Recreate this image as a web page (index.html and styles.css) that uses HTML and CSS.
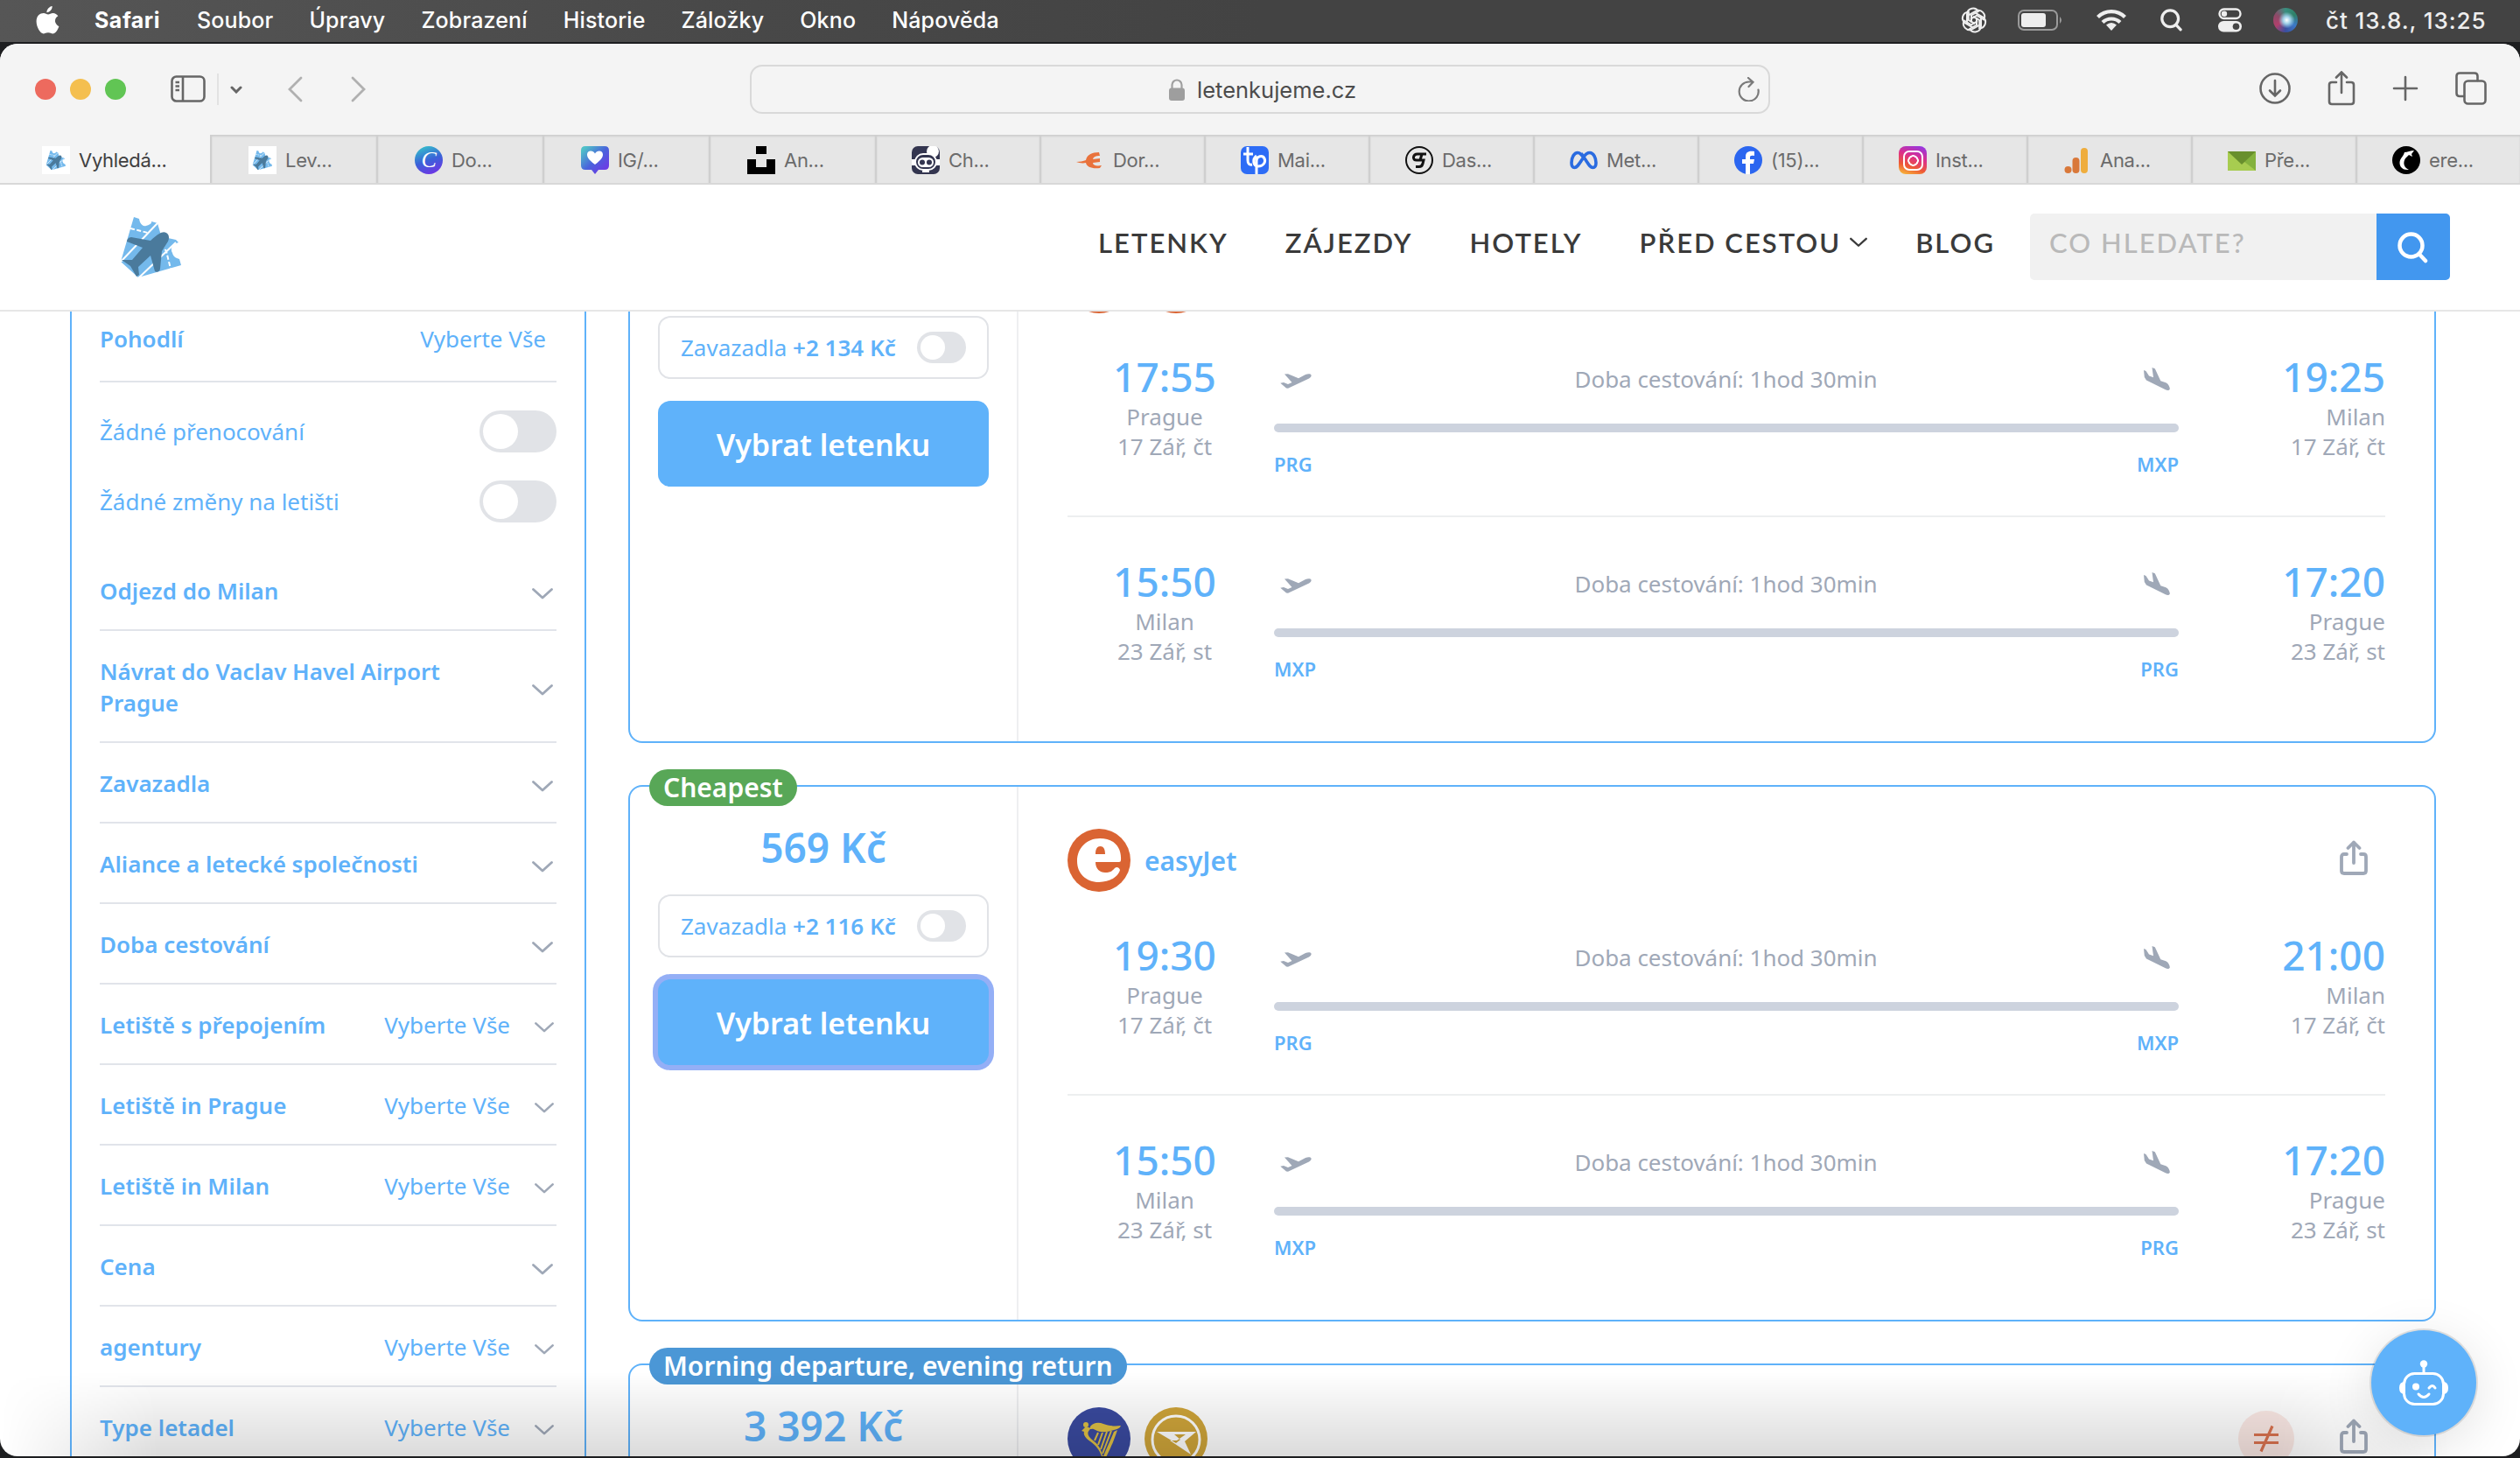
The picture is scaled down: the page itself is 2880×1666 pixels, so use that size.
FILE: index.html
```
<!DOCTYPE html>
<html lang="cs">

<head>
    <meta charset="UTF-8">
    <meta name="viewport" content="width=device-width, initial-scale=1.0">
    <title>Vyhledávání letenek</title>
    <link rel="stylesheet" href="styles.css">
</head>

<body>
    <!-- icons -->
    <svg width="0" height="0" class="sprite">
        <symbol id="logo" viewBox="16 14 74 74">
            <path fill="#74b9ec" d="M33 17l6 2c1 6 4 9 8 8s7-3 6-5l7 2 4 14 8 3 9 2 3 3c-7 2-10 7-7 12 1 4 4 6 8 7l2 7-49 14-20-18z"/>
            <path stroke="#fff" stroke-width="2" d="M60 24L18 68M81 46L38 87"/>
            <path stroke="#fff" stroke-width="2" stroke-dasharray="5 2.5" fill="none" d="M29 30l20 5M64 48l6 8 5 20"/>
            <path fill="#4a7a9c" d="M70 35c-4-2-8 0-18 9l-22-4c-3 0-5 3-5 5l18 7-12 14H19l10 7 7 12 3-2-1-9 14-13 5 18c2 2 6 0 6-3l2-20 5-8c4-5 4-11 0-13z"/>
        </symbol>
        <symbol id="chevron" viewBox="0 0 24 13">
            <path fill="none" stroke="currentColor" stroke-width="2.8" stroke-linecap="round" stroke-linejoin="round" d="M1.5 1.5L12 11 22.5 1.5"/>
        </symbol>
        <symbol id="takeoff" viewBox="0 0 36 17">
            <path fill="currentColor" d="M5 .5l4-.3 12 5 8-4.2c3-1 6-.8 6.500.5s-.5 2.500-2.500 4L9 16.800 7 16.600.3 10.700l3.700-.6 5 1.800 4.500-2z"/>
        </symbol>
        <symbol id="landing" viewBox="0 0 30 26">
            <path fill="currentColor" d="M0 3l2.500 1L6 9.500l5 1.800L9.500 0l3.300 1.200 6.500 14 6 2c3 1.500 4.700 5 4.500 7.500-1 1.600-3 1.400-5 .6L3 14.500.8 11z"/>
        </symbol>
        <symbol id="share" viewBox="0 0 32 40">
            <path fill="none" stroke="currentColor" stroke-width="3.800" stroke-linecap="round" stroke-linejoin="round" d="M16 26V2.500M9.500 9L16 2.500 22.500 9M8 16H5q-3 0-3 3v16q0 3 3 3h22q3 0 3-3V19q0-3-3-3h-3"/>
        </symbol>
        <symbol id="search" viewBox="0 0 36 36">
            <path fill="none" stroke="currentColor" stroke-width="4.500" stroke-linecap="round" d="M24.500 25L32 33M28.500 15.500a13 13 0 1 1-26 0 13 13 0 0 1 26 0z"/>
        </symbol>
        <symbol id="easyjet" viewBox="0 0 72 72">
            <circle cx="36" cy="36" r="36" fill="#da6433"/>
            <path fill="#fff" fill-rule="evenodd" d="M37 11c-15 0-26 11-26 26 0 14 10 24 25 24 12 0 22-6 24-14-1-3-4-4-6-2-3 4-7 5-11 5-6 0-11-4-11-12h27q2 0 2-2c1-15-8-25-24-25zM32 29c0-6 2-9 5.500-9s5.500 3 5.500 9z"/>
        </symbol>
    </svg>

    <!-- system menu bar -->
    <div class="menubar">
        <svg class="apple" viewBox="0 0 26 31">
            <path fill="#fff" d="M18 0c.3 3-2.500 7-6 7-.3-3 2.800-6.600 6-7zM24.500 11c-5 3-4 9 1 11.500-1.500 4-4 8-6.800 8-2 0-2.800-1.200-5.200-1.200s-3.400 1.200-5.200 1.200C5 30.500.5 23.500.5 17S4.500 7.800 8.500 7.800c2 0 3.500 1.300 5 1.300S17 7.600 19 7.700c2.200.1 4.200 1.200 5.500 3.300z"/>
        </svg>
        <span class="app-name">Safari</span>
        <span class="menu">Soubor</span>
        <span class="menu">Úpravy</span>
        <span class="menu">Zobrazení</span>
        <span class="menu">Historie</span>
        <span class="menu">Záložky</span>
        <span class="menu">Okno</span>
        <span class="menu">Nápověda</span>
        <div class="tray">
            <svg width="32" height="32" viewBox="0 0 32 32" fill="none" stroke="#eee" stroke-width="2">
                <g id="petal"><path d="M8 20V9a7 7 0 0 1 13-3l-8 4.500V19"/></g>
                <use href="#petal" transform="rotate(60 16 16)"/>
                <use href="#petal" transform="rotate(120 16 16)"/>
                <use href="#petal" transform="rotate(180 16 16)"/>
                <use href="#petal" transform="rotate(240 16 16)"/>
                <use href="#petal" transform="rotate(300 16 16)"/>
            </svg>
            <svg width="52" height="24" viewBox="0 0 52 24">
                <rect x="1" y="1" width="44" height="22" rx="6" fill="none" stroke="#9a9a9a" stroke-width="2"/>
                <rect x="4" y="4" width="28" height="16" rx="3" fill="#eee"/>
                <path d="M48 8q4 4 0 8z" fill="#9a9a9a"/>
            </svg>
            <svg width="34" height="26" viewBox="0 0 34 26" fill="none" stroke="#eee" stroke-width="4.200">
                <path d="M1.500 9.500a22 22 0 0 1 31 0M7 15.500a14.500 14.500 0 0 1 20 0"/>
                <path fill="#eee" stroke="none" d="M17 25l-6-6.500q6-5 12 0z"/>
            </svg>
            <svg width="26" height="26"><use href="#search"/></svg>
            <svg width="28" height="28" viewBox="0 0 28 28">
                <rect x="1.500" y="1.500" width="24" height="10.500" rx="5.200" fill="none" stroke="#eee" stroke-width="2.400"/>
                <circle cx="7" cy="6.800" r="3.200" fill="#eee"/>
                <rect x="0" y="15" width="27" height="12.500" rx="6.200" fill="#eee"/>
                <circle cx="20.500" cy="21.200" r="3.800" fill="#444"/>
            </svg>
            <span class="siri"></span>
            <span class="clock">čt 13.8., 13:25</span>
        </div>
    </div>

    <div class="window">
        <!-- browser toolbar -->
        <div class="toolbar">
            <div class="toolbar-left">
                <span class="light red"></span>
                <span class="light yellow"></span>
                <span class="light green"></span>
                <svg class="panel-icon" width="40" height="32" viewBox="0 0 40 32" fill="none" stroke="#666" stroke-width="2.600">
                    <rect x="1.500" y="1.500" width="37" height="28" rx="5"/>
                    <path d="M14 1.500v28M5.500 8h4.500M5.500 12.500h4.500M5.500 17h4.500"/>
                </svg>
                <span class="toolbar-sep"></span>
                <svg class="mini-chevron" width="14" height="9" viewBox="0 0 14 9" fill="none" stroke="#666" stroke-width="3" stroke-linecap="round"><path d="M2 2l5 5 5-5"/></svg>
                <svg class="back" width="17" height="30" viewBox="0 0 17 30" fill="none" stroke="#b0b0b0" stroke-width="2.800" stroke-linecap="round"><path d="M15 2L2 15l13 13"/></svg>
                <svg class="forward" width="17" height="30" viewBox="0 0 17 30" fill="none" stroke="#b0b0b0" stroke-width="2.800" stroke-linecap="round"><path d="M2 2l13 13L2 28"/></svg>
            </div>
            <div class="address">
                <svg width="18" height="25" viewBox="0 0 18 25">
                    <path fill="none" stroke="#a0a0a0" stroke-width="2.200" d="M3.500 12V7a5.500 5.500 0 0 1 11 0v5"/>
                    <rect y="10.500" width="18" height="14.500" rx="3" fill="#9e9e9e"/>
                </svg>
                <span>letenkujeme.cz</span>
                <svg class="reload" width="26" height="28" viewBox="0 0 26 28" fill="none" stroke="#7a7a7a" stroke-width="2.200" stroke-linecap="round">
                    <path d="M23.500 14.500A11 11 0 1 1 13 5.500h4M12 1l5.500 4.800L12.500 11"/>
                </svg>
            </div>
            <div class="toolbar-right">
                <svg width="36" height="36" viewBox="0 0 36 36"><circle cx="18" cy="18" r="16.500"/><path d="M18 9v17M12 20.500l6 6 6-6"/></svg>
                <svg width="32" height="40" viewBox="0 0 32 40"><path d="M16 25V2M10 7.500L16 1.500l6 6M10 13H5q-3 0-3 3v19q0 3 3 3h22q3 0 3-3V16q0-3-3-3h-5"/></svg>
                <svg width="30" height="30" viewBox="0 0 30 30"><path d="M15 2v26M2 15h26"/></svg>
                <svg width="36" height="38" viewBox="0 0 36 38"><rect x="10.500" y="10.500" width="24" height="26" rx="4"/><path d="M10 28H5q-3.500 0-3.500-3.500V5Q1.500 1.500 5 1.500h17q3.500 0 3.500 3.500v5"/></svg>
            </div>
        </div>

        <div class="tabs">
            <div class="tab active"><span class="favicon white"><svg width="24" height="24"><use href="#logo"/></svg></span>Vyhledá...</div>
            <div class="tab wide"><span class="favicon white"><svg width="24" height="24"><use href="#logo"/></svg></span>Lev...</div>
            <div class="tab wide"><span class="favicon canva">C</span>Do...</div>
            <div class="tab wide">
                <svg class="favicon" viewBox="0 0 32 32">
                    <defs><linearGradient id="heart" x2="1" y2="1"><stop offset=".1" stop-color="#4fc0c8"/><stop offset=".5" stop-color="#4a63dc"/><stop offset="1" stop-color="#7a2be8"/></linearGradient></defs>
                    <path fill="url(#heart)" d="M5 0h22q5 0 5 5v17q0 5-5 5h-7l-4 5-4-5H5q-5 0-5-5V5q0-5 5-5z"/>
                    <path fill="#fff" d="M16 21C8 15 7 12 7 9.500c0-5 7-5 9-1 2-4 9-4 9 1 0 2.500-1 5.500-9 11.500z"/>
                </svg>IG/...
            </div>
            <div class="tab wide">
                <svg class="favicon" viewBox="0 0 32 32"><path d="M10 0h12v9H10zM0 15h10v9h12v-9h10v17H0z"/></svg>An...
            </div>
            <div class="tab">
                <svg class="favicon" viewBox="0 0 32 32">
                    <rect width="32" height="32" rx="7" fill="#33354f"/>
                    <circle cx="24" cy="6" r="7" fill="#fff"/>
                    <path fill="#fff" d="M0 15h4v7H0zM28 15h4v7h-4z"/>
                    <rect x="4" y="9" width="24" height="18" rx="9" fill="#33354f" stroke="#fff" stroke-width="2"/>
                    <rect x="7" y="13" width="18" height="11" rx="5.500" fill="#fff"/>
                    <circle cx="12" cy="18.500" r="3" fill="#33354f"/><circle cx="20" cy="18.500" r="3" fill="#33354f"/>
                    <path d="M12 28h8v2h-8z" fill="#fff"/>
                </svg>Ch...
            </div>
            <div class="tab">
                <svg class="favicon" viewBox="0 0 32 32"><path fill="#e9723c" d="M26 7l1 4c-5 0-7 1-8 4l8-1v4l-8 1c0 3 4 4 10 3l-2 3c-9 1-15-1-16-6-4 1-8 0-11-1 4 0 8-1 11-2 1-6 7-9 15-9z"/></svg>Dor...
            </div>
            <div class="tab">
                <svg class="favicon" viewBox="0 0 32 32"><rect width="32" height="32" rx="7" fill="#2d6cf6"/><path fill="none" stroke="#fff" stroke-width="3" d="M8 1v15q0 6 5 5M3 9h11M18 11c-5 4-4 12 2 12s9-5 7-9-9-3-9 3v15"/></svg>Mai...
            </div>
            <div class="tab">
                <svg class="favicon" viewBox="0 0 32 32" fill="none" stroke="#111"><circle cx="16" cy="16" r="15" stroke-width="2"/><path stroke-width="3" d="M18 9h-4q-4 0-4.500 3.500T13 16h4M24 9h-5l-2 7h4l-1 4q-1 3.500-4 3.500h-4"/></svg>Das...
            </div>
            <div class="tab">
                <svg class="favicon" viewBox="0 0 32 32" fill="none" stroke="#2a6be0" stroke-width="3.600"><path d="M16 14C13 8 11 7.500 9 7.500 5 7.500 2 13 2 19c0 3 1 5.500 3.500 5.500 3 0 4.500-3 10.500-12 2-3.500 4-5 7-5 4 0 7 6 7 11.500 0 3-1 5.500-3.500 5.500-3.500 0-5-4-10.500-12z"/></svg>Met...
            </div>
            <div class="tab">
                <svg class="favicon" viewBox="0 0 32 32"><circle cx="16" cy="16" r="16" fill="#2b66f0"/><path fill="#fff" d="M13 32V20H9v-5h4v-3c0-5 3-7 10-6v5c-4-.5-5 0-5 2v2h5l-1 5h-4v12z"/></svg>(15)...
            </div>
            <div class="tab"><span class="favicon insta"><i></i></span>Inst...</div>
            <div class="tab">
                <svg class="favicon" viewBox="0 0 32 32"><rect x="20" y="2" width="8" height="29" rx="4" fill="#efad3d"/><rect x="10.500" y="13" width="8" height="18" rx="4" fill="#d9783a"/><circle cx="5.500" cy="27" r="4" fill="#d9783a"/></svg>Ana...
            </div>
            <div class="tab">
                <svg class="favicon" viewBox="0 0 32 32"><path fill="#a7cc50" d="M0 6h32v22H0z"/><path fill="#84b23e" d="M32 6v22L14 14z"/><path fill="#688f2d" d="M0 6h32L16 21z"/></svg>Pře...
            </div>
            <div class="tab">
                <svg class="favicon" viewBox="0 0 32 32"><circle cx="16" cy="16" r="16"/><path fill="#fff" d="M25 5l-3 4 1 3-4-2-4 4c-3 5-2 10 4 13-8 1-12-5-10-11 1-3 4-5 5-9 3 0 7-2 11-2z"/></svg>ere...
            </div>
        </div>

        <!-- site header -->
        <header class="header">
            <svg class="site-logo"><use href="#logo"/></svg>
            <nav class="nav">
                <a>LETENKY</a>
                <a>ZÁJEZDY</a>
                <a>HOTELY</a>
                <a class="has-sub">PŘED CESTOU <svg width="20" height="12"><use href="#chevron"/></svg></a>
                <a>BLOG</a>
            </nav>
            <div class="search">
                <span class="search-input">CO HLEDATE?</span>
                <span class="search-btn"><svg width="36" height="36"><use href="#search"/></svg></span>
            </div>
        </header>

        <main class="page">
            <aside class="filters">
                <div class="filter first"><b>Pohodlí</b><a>Vyberte Vše</a></div>
                <div class="switch-row">Žádné přenocování<span class="switch"></span></div>
                <div class="switch-row">Žádné změny na letišti<span class="switch"></span></div>
                <div class="filter gap-top"><b>Odjezd do Milan</b><svg class="chev"><use href="#chevron"/></svg></div>
                <div class="filter"><b>Návrat do Vaclav Havel Airport Prague</b><svg class="chev"><use href="#chevron"/></svg></div>
                <div class="filter"><b>Zavazadla</b><svg class="chev"><use href="#chevron"/></svg></div>
                <div class="filter"><b>Aliance a letecké společnosti</b><svg class="chev"><use href="#chevron"/></svg></div>
                <div class="filter"><b>Doba cestování</b><svg class="chev"><use href="#chevron"/></svg></div>
                <div class="filter"><b>Letiště s přepojením</b><a>Vyberte Vše</a><svg class="chev small"><use href="#chevron"/></svg></div>
                <div class="filter"><b>Letiště in Prague</b><a>Vyberte Vše</a><svg class="chev small"><use href="#chevron"/></svg></div>
                <div class="filter"><b>Letiště in Milan</b><a>Vyberte Vše</a><svg class="chev small"><use href="#chevron"/></svg></div>
                <div class="filter"><b>Cena</b><svg class="chev"><use href="#chevron"/></svg></div>
                <div class="filter"><b>agentury</b><a>Vyberte Vše</a><svg class="chev small"><use href="#chevron"/></svg></div>
                <div class="filter"><b>Type letadel</b><a>Vyberte Vše</a><svg class="chev small"><use href="#chevron"/></svg></div>
            </aside>

            <section class="results">
                <article class="card">
                    <div class="offer">
                        <div class="price"></div>
                        <div class="luggage">Zavazadla&nbsp;<b>+2 134 Kč</b><span class="switch mini"></span></div>
                        <div class="select-btn">Vybrat letenku</div>
                    </div>
                    <div class="trip">
                        <div class="airline">
                            <svg class="carrier"><use href="#easyjet"/></svg>
                            <svg class="carrier"><use href="#easyjet"/></svg>
                        </div>
                        <div class="leg">
                            <div class="stop"><div class="time">17:55</div>Prague<br>17 Zář, čt</div>
                            <div class="route">
                                <div class="duration"><svg class="takeoff"><use href="#takeoff"/></svg>Doba cestování: 1hod 30min<svg class="landing"><use href="#landing"/></svg></div>
                                <div class="bar"></div>
                                <div class="codes"><span>PRG</span><span>MXP</span></div>
                            </div>
                            <div class="stop arrival"><div class="time">19:25</div>Milan<br>17 Zář, čt</div>
                        </div>
                        <div class="leg">
                            <div class="stop"><div class="time">15:50</div>Milan<br>23 Zář, st</div>
                            <div class="route">
                                <div class="duration"><svg class="takeoff"><use href="#takeoff"/></svg>Doba cestování: 1hod 30min<svg class="landing"><use href="#landing"/></svg></div>
                                <div class="bar"></div>
                                <div class="codes"><span>MXP</span><span>PRG</span></div>
                            </div>
                            <div class="stop arrival"><div class="time">17:20</div>Prague<br>23 Zář, st</div>
                        </div>
                    </div>
                </article>

                <article class="card">
                    <span class="badge cheapest">Cheapest</span>
                    <div class="offer">
                        <div class="price">569 Kč</div>
                        <div class="luggage">Zavazadla&nbsp;<b>+2 116 Kč</b><span class="switch mini"></span></div>
                        <div class="select-btn focused">Vybrat letenku</div>
                    </div>
                    <div class="trip">
                        <div class="airline">
                            <svg class="carrier"><use href="#easyjet"/></svg>
                            <b>easyJet</b>
                            <svg class="share"><use href="#share"/></svg>
                        </div>
                        <div class="leg">
                            <div class="stop"><div class="time">19:30</div>Prague<br>17 Zář, čt</div>
                            <div class="route">
                                <div class="duration"><svg class="takeoff"><use href="#takeoff"/></svg>Doba cestování: 1hod 30min<svg class="landing"><use href="#landing"/></svg></div>
                                <div class="bar"></div>
                                <div class="codes"><span>PRG</span><span>MXP</span></div>
                            </div>
                            <div class="stop arrival"><div class="time">21:00</div>Milan<br>17 Zář, čt</div>
                        </div>
                        <div class="leg">
                            <div class="stop"><div class="time">15:50</div>Milan<br>23 Zář, st</div>
                            <div class="route">
                                <div class="duration"><svg class="takeoff"><use href="#takeoff"/></svg>Doba cestování: 1hod 30min<svg class="landing"><use href="#landing"/></svg></div>
                                <div class="bar"></div>
                                <div class="codes"><span>MXP</span><span>PRG</span></div>
                            </div>
                            <div class="stop arrival"><div class="time">17:20</div>Prague<br>23 Zář, st</div>
                        </div>
                    </div>
                </article>

                <article class="card">
                    <span class="badge morning">Morning departure, evening return</span>
                    <div class="offer">
                        <div class="price">3 392 Kč</div>
                    </div>
                    <div class="trip">
                        <div class="airline">
                            <svg class="carrier" viewBox="0 0 72 72">
                                <circle cx="36" cy="36" r="36" fill="#3a4a9f"/>
                                <path fill="#dfc044" d="M26 22c4-5 10-5 15-3s12 3 20 2c-1 3-4 4-8 5-8 3-16 3-21 0-3-2-5-1-6-1z"/>
                                <circle cx="21" cy="20" r="3" fill="#dfc044"/>
                                <path fill="#dfc044" d="M16 27l5-5 6 2c-5 4-5 8 1 13 7 5 10 10 12 18l1 1c4-10 8-18 12-28l4-2c-4 12-8 22-14 33h-3c-3-10-7-15-14-20-6-4-8-8-7-11z"/>
                                <path stroke="#dfc044" stroke-width="2" d="M35 29l-4 9M40 29l-5 14M45 28l-7 20M50 27l-10 26"/>
                            </svg>
                            <svg class="carrier" viewBox="0 0 72 72">
                                <circle cx="36" cy="36" r="36" fill="#cfa53a"/>
                                <circle cx="36" cy="37" r="27" fill="none" stroke="#fff" stroke-width="3"/>
                                <path fill="#fff" fill-rule="evenodd" d="M14 28h45L46 39l7 15-24-16h8l10-7H34l7 6-5 4z"/>
                            </svg>
                            <span class="not-equal"><svg width="28" height="32" viewBox="0 0 28 32" fill="none" stroke="#db7350" stroke-width="3.200"><path d="M0 11.500h28M0 20.500h28M21 1.500L8 30.500"/></svg></span>
                            <svg class="share"><use href="#share"/></svg>
                        </div>
                    </div>
                </article>
            </section>
        </main>

        <div class="bottom-shade"></div>
        <div class="chat">
            <svg width="56" height="52" viewBox="0 0 56 52" fill="none" stroke="#fff" stroke-width="3" stroke-linecap="round">
                <circle cx="28" cy="4.500" r="4.200" fill="#fff" stroke="none"/>
                <path d="M28 6v9"/>
                <rect x="5.500" y="15.500" width="45" height="35" rx="12"/>
                <path fill="#fff" stroke="none" d="M6 25q-6 0-6 7t6 7zM50 25q6 0 6 7t-6 7z"/>
                <circle cx="19" cy="30.500" r="4" fill="#fff" stroke="none"/>
                <path d="M34 32q4-5 7 0M22 39q6 7 12 0"/>
            </svg>
        </div>
    </div>
</body>

</html>
```
FILE: styles.css
```
* {
    margin: 0;
    padding: 0;
    box-sizing: border-box;
}

body {
    width: 2880px;
    height: 1666px;
    overflow: hidden;
    background: #1d1e20;
    font-family: 'Noto Sans', sans-serif;
    font-size: 26px;
    color: #5fb2fa;
}

.sprite {
    position: absolute;
}

svg {
    display: block;
    flex-shrink: 0;
}

b {
    font-weight: 600;
}

/* menu bar */
.menubar {
    display: flex;
    align-items: center;
    height: 48px;
    padding: 0 38px 2px 41px;
    background: linear-gradient(90deg, #565656, #484848 30%, #434343 50%);
    color: #fff;
    font-family: 'Inter', sans-serif;
    font-size: 25px;
    font-weight: 500;
}

.apple {
    width: 27px;
    height: 32px;
    margin-right: 40px;
}

.app-name {
    font-weight: 700;
    letter-spacing: 0.5px;
    margin-right: 42px;
}

.menu {
    margin-right: 41px;
    letter-spacing: 0.15px;
}

.tray {
    display: flex;
    align-items: center;
    margin-left: auto;
    color: #eee;
}

.tray svg:nth-child(2) {
    margin-left: 34px;
}

.tray svg:nth-child(3) {
    margin-left: 38px;
}

.tray svg:nth-child(4) {
    margin-left: 39px;
}

.tray svg:nth-child(5) {
    margin-left: 40px;
}

.siri {
    width: 28px;
    height: 28px;
    margin-left: 35px;
    border-radius: 50%;
    background: radial-gradient(circle at 55% 50%, #fff 0, #9fd0e8 20%, transparent 45%), conic-gradient(#3a8f80, #2e8068, #3b78c8, #3a4fa0, #b0406c, #8c4a68, #3a8f80);
}

.clock {
    width: 184px;
    margin-left: 32px;
    font-size: 26px;
    letter-spacing: 0.9px;
    white-space: nowrap;
}

/* browser window */
.window {
    position: relative;
    height: 1614px;
    margin-top: 2px;
    border-radius: 20px;
    overflow: hidden;
    background: #fff;
}

.toolbar {
    display: flex;
    align-items: center;
    height: 104px;
    background: #f4f4f4;
    font-family: 'Inter', sans-serif;
}

.toolbar-left {
    display: flex;
    align-items: center;
    width: 857px;
    padding-left: 40px;
}

.light {
    width: 24px;
    height: 24px;
    margin-right: 16px;
    border-radius: 50%;
}

.red {
    background: #ed6a5e;
}

.yellow {
    background: #f4bf4f;
}

.green {
    background: #61c554;
}

.panel-icon {
    margin-left: 35px;
}

.toolbar-sep {
    width: 2px;
    height: 36px;
    margin-left: 13px;
    background: #e2e2e2;
}

.mini-chevron {
    margin-left: 13px;
}

.back {
    margin-left: 52px;
}

.forward {
    margin-left: 55px;
}

.address {
    position: relative;
    display: flex;
    align-items: center;
    gap: 14px;
    width: 1166px;
    height: 56px;
    padding-left: 477px;
    border: 2px solid #d9d9d9;
    border-radius: 14px;
    color: #4c4c4c;
    font-size: 25.5px;
}

.reload {
    margin-left: auto;
    margin-right: 9px;
}

.toolbar-right {
    display: flex;
    align-items: center;
    margin-left: auto;
    padding-right: 38px;
    padding-bottom: 2px;
    gap: 42px;
    fill: none;
    stroke: #666;
    stroke-width: 2.6;
    stroke-linecap: round;
}

.tabs {
    display: flex;
    height: 57px;
    border-bottom: 2px solid #d8d8d8;
    font-family: 'Inter', sans-serif;
    font-size: 22px;
    color: #6b6b6b;
}

.tab {
    display: flex;
    align-items: center;
    gap: 10px;
    width: 188px;
    padding-left: 40px;
    padding-top: 3px;
    border-left: 2px solid #cfcfcf;
    background: #e6e6e6;
    box-shadow: inset 0 2px 2px #cfcfcf;
    letter-spacing: -0.3px;
}

.tab.wide {
    width: 190px;
    padding-left: 42px;
}

.tab.active {
    width: 240px;
    padding-left: 48px;
    border: 0;
    background: #f4f4f4;
    box-shadow: none;
    color: #404040;
}

.favicon {
    display: flex;
    align-items: center;
    justify-content: center;
    width: 32px;
    height: 32px;
    flex-shrink: 0;
}

.white {
    background: #fff;
}

.canva {
    border-radius: 50%;
    background: linear-gradient(160deg, #35b8cc 10%, #3a62d8 50%, #7a2be8);
    color: #fff;
    font: italic 26px 'Liberation Serif', serif;
}

.insta {
    border-radius: 8px;
    background: linear-gradient(20deg, #f8c53a, #ee5a35 30%, #dc2f8c 60%, #8a38ee);
}

.insta i {
    width: 23px;
    height: 23px;
    border: 2px solid #fff;
    border-radius: 7px;
    background: radial-gradient(circle, transparent 4px, #fff 4.5px, #fff 6px, transparent 6.5px);
}

/* site header */
.header {
    display: flex;
    align-items: center;
    height: 145px;
    padding: 0 80px 2px 136px;
    border-bottom: 2px solid #e6e6e6;
    font-family: 'Lato', sans-serif;
    font-size: 31px;
    letter-spacing: 2px;
    color: #3a3a3a;
}

.site-logo {
    width: 74px;
    height: 74px;
}

.nav {
    display: flex;
    gap: 65px;
    margin-left: auto;
    padding-bottom: 9px;
    font-weight: 600;
}

.nav a {
    white-space: nowrap;
}

.nav .has-sub {
    display: flex;
    align-items: center;
    gap: 10px;
    margin-right: -10px;
}

.search {
    display: flex;
    width: 480px;
    height: 76px;
    margin-left: 40px;
    border-radius: 5px;
    overflow: hidden;
    background: #f1f1f1;
}

.search-input {
    flex: 1;
    padding: 14px 22px;
    color: #b9b9b9;
    font-weight: 500;
}

.search-btn {
    display: flex;
    align-items: center;
    justify-content: center;
    width: 84px;
    padding-top: 3px;
    background: #4297ef;
    color: #fff;
}

/* page */
.page {
    display: flex;
    gap: 48px;
    height: 1308px;
    padding-left: 80px;
    overflow: hidden;
}

.filters {
    width: 590px;
    height: 1400px;
    padding: 0 32px;
    border: 2px solid #5fb2fa;
    border-width: 0 2px;
}

.filter {
    display: flex;
    align-items: center;
    padding: 28px 4px 26px 0;
    border-bottom: 2px solid #e1e4ea;
    line-height: 36px;
}

.filter b {
    width: 320px;
    margin-right: auto;
    white-space: nowrap;
}

.filter:nth-child(5) b {
    width: 440px;
    white-space: normal;
}

.filter.first {
    padding: 13px 12px 30px 0;
}

.gap-top {
    margin-top: 4px;
}

.chev {
    width: 24px;
    height: 13px;
    margin-top: 6px;
    color: #9fa8b7;
}

.chev.small {
    width: 22px;
    height: 12px;
    margin-left: 28px;
    margin-right: -1px;
}

.switch-row {
    display: flex;
    align-items: center;
    justify-content: space-between;
    height: 48px;
    margin: 32px 0;
}

.switch {
    width: 88px;
    height: 48px;
    padding: 4px;
    border-radius: 24px;
    background: #e1e3e7;
}

.switch::before {
    content: '';
    display: block;
    width: 40px;
    height: 40px;
    border-radius: 50%;
    background: #fff;
}

.switch.mini {
    width: 56px;
    height: 36px;
    margin-left: auto;
}

.switch.mini::before {
    width: 28px;
    height: 28px;
}

.results {
    width: 2066px;
    margin-top: -120px;
}

.card {
    position: relative;
    display: flex;
    height: 613px;
    margin-bottom: 48px;
    border: 2px solid #5fb2fa;
    border-radius: 16px;
}

.badge {
    position: absolute;
    left: 22px;
    top: -20px;
    height: 42px;
    padding: 0 16px;
    border-radius: 21px;
    color: #fff;
    font-size: 30px;
    font-weight: 600;
    line-height: 41px;
}

.cheapest {
    background: #58a757;
}

.morning {
    background: #4b97d6;
}

.offer {
    width: 444px;
    padding: 38px 32px 0;
    border-right: 2px solid #eeeff1;
}

.price {
    height: 60px;
    font-size: 46px;
    font-weight: 600;
    line-height: 63px;
    text-align: center;
}

.luggage {
    display: flex;
    align-items: center;
    height: 72px;
    margin: 25px 0;
    padding: 0 24px;
    border: 2px solid #e1e3e7;
    border-radius: 14px;
    white-space: nowrap;
}

.select-btn {
    height: 98px;
    border-radius: 14px;
    background: #5fb2fa;
    color: #fff;
    font-size: 34px;
    font-weight: 600;
    line-height: 100px;
    text-align: center;
}

.select-btn.focused {
    box-shadow: 0 0 0 6px #94aff6;
}

.trip {
    flex: 1;
    padding: 48px 56px 0;
}

.airline {
    display: flex;
    align-items: center;
    gap: 16px;
    height: 72px;
    font-size: 30px;
}

.carrier {
    width: 72px;
    height: 72px;
}

.share {
    width: 36px;
    height: 40px;
    margin-left: auto;
    margin-right: 18px;
    margin-bottom: 6px;
    color: #9fa8b7;
}

.not-equal {
    display: flex;
    align-items: center;
    justify-content: center;
    width: 64px;
    height: 64px;
    margin-left: auto;
    margin-right: 34px;
    border-radius: 50%;
    background: #fbe9e5;
}

.not-equal + .share {
    margin-left: 0;
}

.leg {
    display: grid;
    grid-template-columns: 222px 1034px 1fr;
    column-gap: 14px;
    margin-top: 41px;
    color: #9fa8b7;
    line-height: 34px;
}

.leg + .leg {
    margin-top: 44px;
    padding-top: 42px;
    border-top: 2px solid #edeff0;
}

.stop {
    text-align: center;
}

.arrival {
    text-align: right;
}

.time {
    height: 60px;
    color: #5fb2fa;
    font-size: 46px;
    font-weight: 500;
    line-height: 63px;
}

.route {
    padding-top: 17px;
}

.duration {
    display: flex;
    align-items: center;
    justify-content: space-between;
    padding: 0 10px 0 7px;
    letter-spacing: -0.03px;
}

.takeoff {
    width: 36px;
    height: 17px;
    margin-top: 4px;
    margin-right: -4px;
}

.landing {
    width: 30px;
    height: 26px;
}

.bar {
    height: 10px;
    margin: 34px 0 21px;
    border-radius: 5px;
    background: #cdd3de;
}

.codes {
    display: flex;
    justify-content: space-between;
    color: #5fb2fa;
    font-size: 22px;
    font-weight: 600;
    line-height: 30px;
}

/* overlays */
.bottom-shade {
    position: absolute;
    left: 0;
    right: 0;
    bottom: 0;
    height: 96px;
    background: linear-gradient(transparent, rgba(0, 0, 0, 0.14));
    -webkit-mask-image: linear-gradient(90deg, transparent, #000 180px, #000 2600px, transparent 2800px);
    mask-image: linear-gradient(90deg, transparent, #000 180px, #000 2600px, transparent 2800px);
}

.chat {
    position: absolute;
    right: 50px;
    bottom: 24px;
    display: flex;
    align-items: center;
    justify-content: center;
    width: 120px;
    height: 120px;
    border-radius: 50%;
    background: #5fb2fa;
    box-shadow: 0 0 0 2px rgba(0, 0, 0, 0.1), 0 12px 60px rgba(0, 0, 0, 0.12);
}
```
